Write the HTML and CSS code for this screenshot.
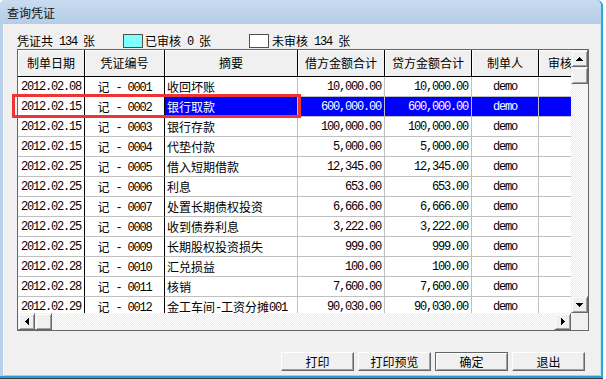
FILE: index.html
```html
<!DOCTYPE html>
<html lang="zh-CN">
<head>
<meta charset="utf-8">
<title>查询凭证</title>
<link rel="stylesheet" href="styles.css">
</head>
<body>
<div class="window">
  <div class="titlebar">查询凭证</div>
  <div class="client">
    <div class="info">
      <span>凭证共<span class="m"> 134 </span>张</span>
      <span class="swatch cyan"></span>
      <span class="lbl">已审核<span class="m"> 0 </span>张</span>
      <span class="swatch white"></span>
      <span class="lbl2">未审核<span class="m"> 134 </span>张</span>
    </div>
    <div class="grid">
      <div class="grid-top">
        <div class="viewport">
          <div class="row hrow">
            <div class="cell c1">制单日期</div>
            <div class="cell c2">凭证编号</div>
            <div class="cell c3">摘要</div>
            <div class="cell c4">借方金额合计</div>
            <div class="cell c5">贷方金额合计</div>
            <div class="cell c6">制单人</div>
            <div class="cell c7">审核日期</div>
          </div>
          <div class="row">
            <div class="cell c1 ctr m">2012.02.08</div>
            <div class="cell c2 ctr">记<span class="m"> - 0001</span></div>
            <div class="cell c3 l">收回坏账</div>
            <div class="cell c4 r m">10,000.00</div>
            <div class="cell c5 r m">10,000.00</div>
            <div class="cell c6 ctr m">demo</div>
            <div class="cell c7"></div>
          </div>
          <div class="row sel">
            <div class="cell c1 ctr m">2012.02.15</div>
            <div class="cell c2 ctr">记<span class="m"> - 0002</span></div>
            <div class="cell c3 l">银行取款</div>
            <div class="cell c4 r m">600,000.00</div>
            <div class="cell c5 r m">600,000.00</div>
            <div class="cell c6 ctr m">demo</div>
            <div class="cell c7"></div>
          </div>
          <div class="row">
            <div class="cell c1 ctr m">2012.02.15</div>
            <div class="cell c2 ctr">记<span class="m"> - 0003</span></div>
            <div class="cell c3 l">银行存款</div>
            <div class="cell c4 r m">100,000.00</div>
            <div class="cell c5 r m">100,000.00</div>
            <div class="cell c6 ctr m">demo</div>
            <div class="cell c7"></div>
          </div>
          <div class="row">
            <div class="cell c1 ctr m">2012.02.15</div>
            <div class="cell c2 ctr">记<span class="m"> - 0004</span></div>
            <div class="cell c3 l">代垫付款</div>
            <div class="cell c4 r m">5,000.00</div>
            <div class="cell c5 r m">5,000.00</div>
            <div class="cell c6 ctr m">demo</div>
            <div class="cell c7"></div>
          </div>
          <div class="row">
            <div class="cell c1 ctr m">2012.02.25</div>
            <div class="cell c2 ctr">记<span class="m"> - 0005</span></div>
            <div class="cell c3 l">借入短期借款</div>
            <div class="cell c4 r m">12,345.00</div>
            <div class="cell c5 r m">12,345.00</div>
            <div class="cell c6 ctr m">demo</div>
            <div class="cell c7"></div>
          </div>
          <div class="row">
            <div class="cell c1 ctr m">2012.02.25</div>
            <div class="cell c2 ctr">记<span class="m"> - 0006</span></div>
            <div class="cell c3 l">利息</div>
            <div class="cell c4 r m">653.00</div>
            <div class="cell c5 r m">653.00</div>
            <div class="cell c6 ctr m">demo</div>
            <div class="cell c7"></div>
          </div>
          <div class="row">
            <div class="cell c1 ctr m">2012.02.25</div>
            <div class="cell c2 ctr">记<span class="m"> - 0007</span></div>
            <div class="cell c3 l">处置长期债权投资</div>
            <div class="cell c4 r m">6,666.00</div>
            <div class="cell c5 r m">6,666.00</div>
            <div class="cell c6 ctr m">demo</div>
            <div class="cell c7"></div>
          </div>
          <div class="row">
            <div class="cell c1 ctr m">2012.02.25</div>
            <div class="cell c2 ctr">记<span class="m"> - 0008</span></div>
            <div class="cell c3 l">收到债券利息</div>
            <div class="cell c4 r m">3,222.00</div>
            <div class="cell c5 r m">3,222.00</div>
            <div class="cell c6 ctr m">demo</div>
            <div class="cell c7"></div>
          </div>
          <div class="row">
            <div class="cell c1 ctr m">2012.02.25</div>
            <div class="cell c2 ctr">记<span class="m"> - 0009</span></div>
            <div class="cell c3 l">长期股权投资损失</div>
            <div class="cell c4 r m">999.00</div>
            <div class="cell c5 r m">999.00</div>
            <div class="cell c6 ctr m">demo</div>
            <div class="cell c7"></div>
          </div>
          <div class="row">
            <div class="cell c1 ctr m">2012.02.28</div>
            <div class="cell c2 ctr">记<span class="m"> - 0010</span></div>
            <div class="cell c3 l">汇兑损益</div>
            <div class="cell c4 r m">100.00</div>
            <div class="cell c5 r m">100.00</div>
            <div class="cell c6 ctr m">demo</div>
            <div class="cell c7"></div>
          </div>
          <div class="row">
            <div class="cell c1 ctr m">2012.02.28</div>
            <div class="cell c2 ctr">记<span class="m"> - 0011</span></div>
            <div class="cell c3 l">核销</div>
            <div class="cell c4 r m">7,600.00</div>
            <div class="cell c5 r m">7,600.00</div>
            <div class="cell c6 ctr m">demo</div>
            <div class="cell c7"></div>
          </div>
          <div class="row">
            <div class="cell c1 ctr m">2012.02.29</div>
            <div class="cell c2 ctr">记<span class="m"> - 0012</span></div>
            <div class="cell c3 l">金工车间<span class="m">-</span>工资分摊<span class="m">001</span></div>
            <div class="cell c4 r m">90,030.00</div>
            <div class="cell c5 r m">90,030.00</div>
            <div class="cell c6 ctr m">demo</div>
            <div class="cell c7"></div>
          </div>
        </div>
        <div class="vscroll">
          <div class="sbtn"><svg width="7" height="4" viewBox="0 0 7 4"><path d="M3 0h1v1h1v1h1v1h1v1H0V3h1V2h1V1h1z"/></svg></div>
          <div class="sbtn"></div>
          <div class="track"></div>
          <div class="sbtn"><svg width="7" height="4" viewBox="0 0 7 4"><path d="M0 0h7v1H6v1H5v1H4v1H3V3H2V2H1V1H0z"/></svg></div>
        </div>
      </div>
      <div class="grid-bottom">
        <div class="hscroll">
          <div class="sbtn"><svg width="4" height="7" viewBox="0 0 4 7"><path d="M3 0h1v7H3V6H2V5H1V4H0V3h1V2h1V1h1z"/></svg></div>
          <div class="sbtn"></div>
          <div class="track"></div>
          <div class="sbtn"><svg width="4" height="7" viewBox="0 0 4 7"><path d="M0 0h1v1h1v1h1v1h1v1H3v1H2v1H1v1H0z"/></svg></div>
        </div>
        <div class="corner"></div>
      </div>
    </div>
    <div class="actions">
      <button class="btn">打印</button>
      <button class="btn">打印预览</button>
      <button class="btn def">确定</button>
      <button class="btn">退出</button>
    </div>
  </div>
</div>
<div class="mark"></div>
</body>
</html>
```
FILE: styles.css
```css
* { box-sizing: border-box; }
html, body { margin: 0; padding: 0; }
body {
  width: 606px;
  height: 379px;
  position: relative;
  overflow: hidden;
  background: #ffffff;
  font-family: "Noto Sans CJK SC", sans-serif;
  font-size: 12px;
  color: #000;
}
.window {
  width: 603px;
  height: 378px;
  display: flex;
  flex-direction: column;
  background: #b9d1ea;
  border-right: 2px solid #2aa9e4;
  border-bottom: 2px solid #2a9ad8;
  border-top-right-radius: 6px;
  border-top-left-radius: 5px;
  box-shadow: 0 1px 0 #3c3c3c;
}
.titlebar {
  height: 24px;
  flex: none;
  display: flex;
  align-items: center;
  padding-left: 7px;
  padding-top: 1px;
  line-height: 16px;
  background: linear-gradient(#c8dbf0, #b5cde8);
  border-top-left-radius: 5px;
  border-top-right-radius: 6px;
  color: #111;
}
.client {
  flex: 1;
  margin-left: 3px;
  background: #f0f0f0;
  border-left: 1px solid #f7f7f7;
  border-right: 1px solid #d3e3f2;
  border-bottom: 1px solid #a9cbe7;
  padding: 0 11px 4px 13px;
  display: flex;
  flex-direction: column;
}
.m {
  font-family: "Liberation Mono", monospace;
  font-size: 12px;
  letter-spacing: -1.2px;
}
span.m { line-height: 1; vertical-align: 1px; }
.info {
  height: 25px;
  flex: none;
  padding-top: 8px;
  display: flex;
  align-items: center;
  line-height: 16px;
  white-space: pre;
}
.swatch {
  width: 20px;
  height: 14px;
  border: 1px solid #505050;
}
.swatch.cyan { background: #80ffff; margin-left: 28px; }
.swatch.white { background: #ffffff; margin-left: 38px; }
.lbl { margin-left: 2px; }
.lbl2 { margin-left: 3px; }

.grid {
  height: 282px;
  flex: none;
  border: 1px solid #666;
  display: flex;
  flex-direction: column;
  background: #fff;
}
.grid-top { flex: 1; display: flex; min-height: 0; }
.viewport { flex: 1; overflow: hidden; min-width: 0; }
.vscroll { width: 17px; flex: none; display: flex; flex-direction: column; }
.grid-bottom { height: 17px; flex: none; display: flex; }
.hscroll { flex: 1; display: flex; }
.corner { width: 17px; flex: none; background: #f0f0f0; }

.row { display: flex; height: 20px; }
.cell {
  flex: none;
  height: 100%;
  border-right: 1px solid #c0c0c0;
  border-bottom: 1px solid #c0c0c0;
  white-space: pre;
  overflow: hidden;
  line-height: 19px;
}
.cell.m { padding-top: 1px; }
.c1 { width: 67px; }
.c2 { width: 80px; }
.c3 { width: 133px; }
.c4 { width: 87px; }
.c5 { width: 87px; }
.c6 { width: 67px; }
.c7 { width: 67px; }
.row .c1, .row .c2 { border-right-color: #000; }
.hrow { height: 27px; }
.hrow .cell {
  background: #f0f0f0;
  border-right: 1px solid #000;
  border-bottom: 1px solid #000;
  line-height: 26px;
  text-align: center;
  box-shadow: inset 1px 1px 0 #fff;
}
.ctr { text-align: center; }
.r { text-align: right; padding-right: 3px; }
.l { padding-left: 2px; }
.sel .c3, .sel .c4, .sel .c5, .sel .c6, .sel .c7 {
  background: #0000ff;
  color: #fff;
}

.sbtn {
  width: 17px;
  height: 17px;
  flex: none;
  background: #f0f0f0;
  border: 1px solid;
  border-color: #f0f0f0 #696969 #696969 #f0f0f0;
  box-shadow: inset 1px 1px 0 #fff, inset -1px -1px 0 #a0a0a0;
  display: flex;
  align-items: center;
  justify-content: center;
}
.sbtn svg { display: block; fill: #000; }
.track {
  flex: 1;
  background: repeating-conic-gradient(#ffffff 0 25%, #ebebeb 0 50%) 0 0 / 2px 2px;
}

.actions {
  display: flex;
  justify-content: flex-end;
  gap: 4px;
  margin-top: 21px;
  padding-right: 4px;
}
.btn {
  width: 73px;
  height: 19px;
  padding: 0;
  margin: 0;
  font-family: "Noto Sans CJK SC", sans-serif;
  font-size: 12px;
  line-height: 16px;
  color: #000;
  background: #f0f0f0;
  border: 1px solid;
  border-color: #fff #696969 #696969 #fff;
  box-shadow: inset -1px -1px 0 #a0a0a0;
  border-radius: 0;
}
.btn.def {
  border: 1px solid #646464;
  box-shadow: inset 1px 1px 0 #fff, inset -1px -1px 0 #a0a0a0;
}
.mark {
  position: absolute;
  left: 12px;
  top: 94px;
  width: 289px;
  height: 24px;
  border: 3px solid #ee3535;
}
```
